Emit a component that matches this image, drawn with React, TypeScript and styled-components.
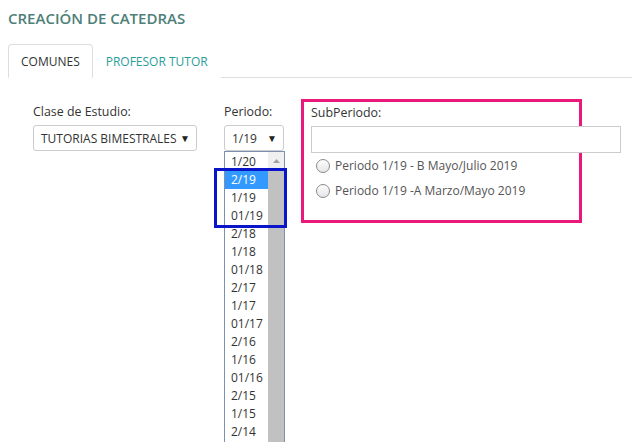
import React from "react";
import styled, { createGlobalStyle } from "styled-components";

const Global = createGlobalStyle`
  html, body { margin: 0; padding: 0; background: #fff; }
  body { font-family: "Open Sans", "Liberation Sans", sans-serif; color: #333; }
  * { box-sizing: border-box; }
`;

const Page = styled.div`
  width: 632px;
  height: 442px;
  overflow: hidden;
  padding: 0 0 0 8px;
`;

const Title = styled.h1`
  margin: 0;
  padding-top: 8px;
  height: 44px;
  font-size: 15px;
  line-height: 20px;
  font-weight: 600;
  color: #4e7f78;
  letter-spacing: 0;
`;

const Tabs = styled.div`
  display: flex;
  border-bottom: 1px solid #ddd;
  height: 34px;
`;

const Tab = styled.div<{ $active?: boolean }>`
  height: 34px;
  padding: 0 12px;
  display: flex;
  align-items: center;
  font-size: 12px;
  border: 1px solid ${(p) => (p.$active ? "#ddd" : "transparent")};
  border-bottom-color: ${(p) => (p.$active ? "#fff" : "transparent")};
  border-radius: 4px 4px 0 0;
  background: #fff;
  color: ${(p) => (p.$active ? "#333" : "#2a9d9a")};
`;

const Form = styled.div`
  display: flex;
  align-items: flex-start;
  padding: 22px 0 0 25px;
`;

const Field = styled.div<{ $w: number; $gap: number }>`
  width: ${(p) => p.$w}px;
  margin-right: ${(p) => p.$gap}px;
  position: relative;
  padding-top: 3px;
`;

const Label = styled.div`
  font-size: 12.4px;
  line-height: 18px;
  height: 22px;
  color: #333;
`;

const Select = styled.div`
  height: 26px;
  border: 1px solid #ccc;
  border-radius: 3px;
  display: flex;
  align-items: center;
  justify-content: space-between;
  padding: 0 6px 0 7px;
  font-size: 12px;
  color: #333;
  background: #fff;
`;

const Caret = styled.span`
  font-size: 10px;
  color: #222;
`;

const ListBox = styled.div`
  position: absolute;
  left: 0;
  top: 51px;
  width: 61px;
  height: 300px;
  border: 1px solid #7f8fb0;
  background: #fff;
  display: flex;
`;

const Options = styled.div`
  flex: 1;
  padding-top: 1px;
`;

const Option = styled.div<{ $sel?: boolean }>`
  height: 18px;
  line-height: 18px;
  font-size: 12px;
  padding-left: 6px;
  color: ${(p) => (p.$sel ? "#fff" : "#333")};
  background: ${(p) => (p.$sel ? "#3399ff" : "transparent")};
`;

const Scroll = styled.div`
  width: 16px;
  display: flex;
  flex-direction: column;
`;

const ScrollUp = styled.div`
  height: 17px;
  background: #f0f0f0;
  display: flex;
  align-items: center;
  justify-content: center;
`;

const Thumb = styled.div`
  flex: 1;
  background: #c1c1c1;
`;

const BlueMark = styled.div`
  position: absolute;
  left: -10px;
  top: 68px;
  width: 73px;
  height: 60px;
  border: 3px solid #0a14c8;
  pointer-events: none;
`;

const PinkBox = styled.div`
  margin-top: -1px;
  width: 281px;
  height: 124px;
  border: 3px solid #e8197b;
  padding: 2px 0 0 7px;
  position: relative;
`;

const WideInput = styled.div`
  width: 310px;
  height: 27px;
  border: 1px solid #ccc;
  background: #fff;
  position: relative;
  z-index: 0;
`;

const RadioRow = styled.label`
  display: flex;
  align-items: center;
  gap: 5px;
  height: 25px;
  padding-left: 5px;
  font-size: 12px;
  color: #555;
`;

const RadioCircle = styled.span`
  width: 14px;
  height: 14px;
  border-radius: 50%;
  border: 1px solid #8a8a8a;
  background: linear-gradient(#fdfdfd, #e6e6e6);
`;

const RadioList = styled.div`
  padding-top: 0px;
`;

const periods = [
  "1/20", "2/19", "1/19", "01/19", "2/18", "1/18", "01/18", "2/17", "1/17",
  "01/17", "2/16", "1/16", "01/16", "2/15", "1/15", "2/14",
];

export default function App() {
  return (
    <Page>
      <Global />
      <Title>CREACIÓN DE CATEDRAS</Title>
      <Tabs>
        <Tab $active>COMUNES</Tab>
        <Tab>PROFESOR TUTOR</Tab>
      </Tabs>
      <Form>
        <Field $w={164} $gap={27}>
          <Label>Clase de Estudio:</Label>
          <Select>
            <span>TUTORIAS BIMESTRALES</span>
            <Caret>▼</Caret>
          </Select>
        </Field>
        <Field $w={60} $gap={17}>
          <Label>Periodo:</Label>
          <Select>
            <span>1/19</span>
            <Caret>▼</Caret>
          </Select>
          <ListBox>
            <Options>
              {periods.map((p, i) => (
                <Option key={p} $sel={i === 1}>{p}</Option>
              ))}
            </Options>
            <Scroll>
              <ScrollUp>
                <svg width="7" height="4" viewBox="0 0 7 4">
                  <path d="M0 4 L3.5 0 L7 4 Z" fill="#a3a3a3" />
                </svg>
              </ScrollUp>
              <Thumb />
            </Scroll>
          </ListBox>
          <BlueMark />
        </Field>
        <PinkBox>
          <Label>SubPeriodo:</Label>
          <WideInput />
          <RadioList>
            <RadioRow><RadioCircle />Periodo 1/19 - B Mayo/Julio 2019</RadioRow>
            <RadioRow><RadioCircle />Periodo 1/19 -A Marzo/Mayo 2019</RadioRow>
          </RadioList>
        </PinkBox>
      </Form>
    </Page>
  );
}
